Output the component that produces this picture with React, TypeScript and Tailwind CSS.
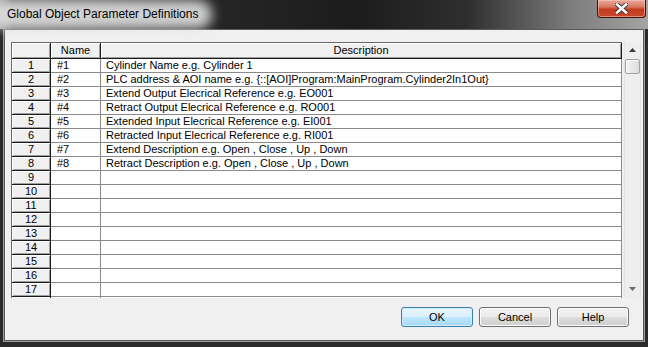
const rows: [string, string][] = [
  ['#1', 'Cylinder Name e.g. Cylinder 1'],
  ['#2', 'PLC address & AOI name e.g. {::[AOI]Program:MainProgram.Cylinder2In1Out}'],
  ['#3', 'Extend Output Elecrical Reference e.g. EO001'],
  ['#4', 'Retract Output Elecrical Reference e.g. RO001'],
  ['#5', 'Extended Input Elecrical Reference e.g. EI001'],
  ['#6', 'Retracted Input Elecrical Reference e.g. RI001'],
  ['#7', 'Extend Description e.g. Open , Close , Up , Down'],
  ['#8', 'Retract Description e.g. Open , Close , Up , Down'],
];

// 17 visible rows, the 18th only peeks in under the last one
const allRows = Array.from({ length: 18 }, (_, i) => rows[i] ?? ['', '']);

const headCell =
  'border-r border-b border-[#1b1b1b] bg-[#f0f0f0] shadow-[inset_1px_1px_0_#ffffff,inset_-1px_-1px_0_#a0a0a0]';

const TitleBar = () => (
  <div className="relative h-[29px] shrink-0 bg-[linear-gradient(90deg,#a8a8a8_0%,#5a5a5a_2%,#262626_32%,#1c1c1c_55%,#2e2e2e_72%,#7c7c7c_88%,#a4a4a4_100%)]">
    {/* aero title glow */}
    <div className="absolute -left-[8px] top-[0px] h-[29px] w-[220px] rounded-full bg-[#e2e2e2] opacity-90 blur-[6px]" />
    <p className="relative pl-[7px] font-['Liberation_Sans',Arial,sans-serif] text-[12px] leading-[28px] text-black">
      Global Object Parameter Definitions
    </p>
    <button className="absolute right-[2px] top-0 flex h-[18px] w-[49px] items-center justify-center rounded-b-[4px] border border-t-0 border-[#3c1410] bg-[linear-gradient(180deg,#e9a898_0%,#d77a64_40%,#c23a20_55%,#c9482c_100%)] shadow-[inset_0_0_0_1px_rgba(255,200,190,0.55)]">
      <svg width="13" height="11" viewBox="0 0 13 11">
        <path d="M2 1.5 L11 9.5 M11 1.5 L2 9.5" stroke="#3a3a3a" strokeWidth="4.4" strokeLinecap="square" />
        <path d="M2 1.5 L11 9.5 M11 1.5 L2 9.5" stroke="#ffffff" strokeWidth="2.6" strokeLinecap="square" />
      </svg>
    </button>
  </div>
);

const Scrollbar = () => (
  <div className="ml-[2px] flex h-full w-[17px] flex-col items-center border-x border-[#e4e4e4] bg-[#eeeeee]">
    <svg className="mt-[6px]" width="7" height="4" viewBox="0 0 7 4">
      <path d="M0 4 L3.5 0 L7 4 Z" fill="#3a3a3a" />
    </svg>
    <div className="mt-[7px] h-[15px] w-[15px] rounded-[2px] border border-[#a0a0a0] bg-[linear-gradient(90deg,#f4f4f4,#dcdcdc)] shadow-[inset_1px_1px_0_#ffffff]" />
    <div className="flex-1" />
    <svg className="mb-[7px]" width="7" height="4" viewBox="0 0 7 4">
      <path d="M0 0 L7 0 L3.5 4 Z" fill="#6a6a6a" />
    </svg>
  </div>
);

const DialogButton = ({ label, active }: { label: string; active?: boolean }) => (
  <button
    className={
      active
        ? 'h-[20px] w-[72px] rounded-[3px] border border-[#3c7fb1] bg-[linear-gradient(180deg,#eaf6fd_0%,#d9f0fc_50%,#bee6fd_51%,#a7d9f5_100%)] text-[11px] leading-[18px] shadow-[inset_0_0_0_1px_#d2edfb]'
        : 'h-[20px] w-[72px] rounded-[3px] border border-[#707070] bg-[linear-gradient(180deg,#f2f2f2_0%,#ebebeb_50%,#dddddd_51%,#cfcfcf_100%)] text-[11px] leading-[18px] shadow-[inset_0_0_0_1px_#fcfcfc]'
    }
  >
    {label}
  </button>
);

export default function App() {
  return (
    <div className="flex h-[347px] w-[648px] flex-col overflow-hidden bg-[#2a2a2a] font-['Liberation_Sans',Arial,sans-serif] text-[11px] text-black">
      <TitleBar />
      <div className="mx-[4px] mb-[6px] flex flex-1 flex-col border border-[#5a5a5a] bg-[#f0f0f0] pl-[6px] pr-[14px] pt-[12px] shadow-[0_0_0_1px_#9a9a9a]">
        <div className="-mr-[14px] flex h-[256px]">
          <div className="w-[611px] overflow-hidden border-l border-t border-[#6a6a6a] bg-white">
            <div className="flex h-[16px] leading-[15px]">
              <div className={`w-[39px] ${headCell}`} />
              <div className={`w-[50px] text-center ${headCell}`}>Name</div>
              <div className={`w-[521px] text-center ${headCell}`}>Description</div>
            </div>
            {allRows.map(([name, desc], i) => (
              <div key={i} className="flex h-[14px] leading-[13px]">
                <div className={`w-[39px] text-center ${headCell}`}>{i < 17 ? i + 1 : ''}</div>
                <div className="w-[50px] border-b border-r border-[#8a8a8a] pl-[6px] whitespace-nowrap">{name}</div>
                <div className="w-[521px] border-b border-r border-[#8a8a8a] pl-[5px] whitespace-nowrap">{desc}</div>
              </div>
            ))}
          </div>
          <Scrollbar />
        </div>
        <div className="mt-[9px] flex justify-end gap-[6px]">
          <DialogButton label="OK" active />
          <DialogButton label="Cancel" />
          <DialogButton label="Help" />
        </div>
      </div>
    </div>
  );
}
